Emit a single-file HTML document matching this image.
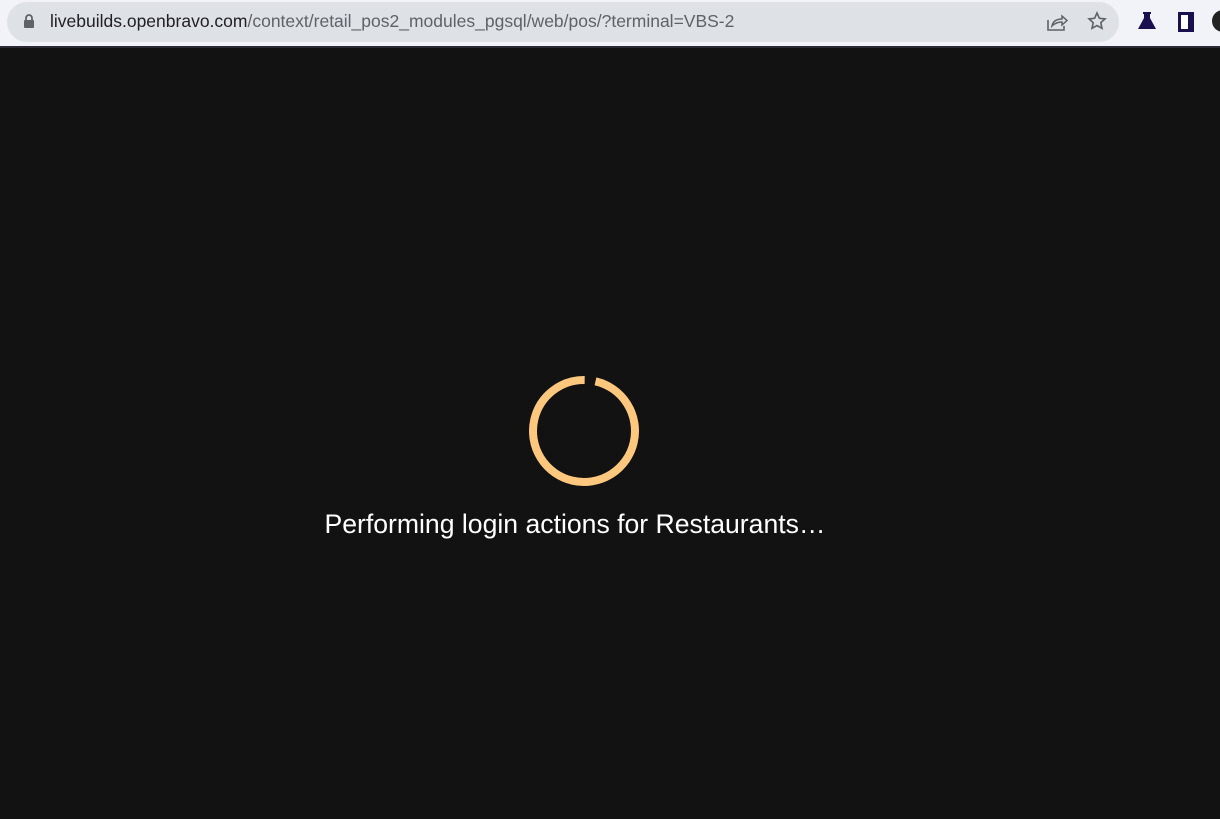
<!DOCTYPE html>
<html><head><meta charset="utf-8"><style>
html,body{margin:0;padding:0;width:1220px;height:819px;overflow:hidden;background:#121212;font-family:"Liberation Sans",sans-serif}
#bar{position:absolute;left:0;top:0;width:1220px;height:46px;background:#f1f3f9;border-bottom:2px solid #2a2a35}
#pill{position:absolute;left:7px;top:2px;width:1112px;height:40px;background:#dee1e6;border-radius:20px}
#url{position:absolute;left:50px;top:11px;font-size:17.5px;color:#5f6368;white-space:nowrap}
#url b{font-weight:normal;color:#202124}
#msg{position:absolute;left:0;width:1150px;top:509px;text-align:center;color:#fff;font-size:26.6px;}
</style></head><body>
<div id="bar">
<div id="pill"></div>
<svg style="position:absolute;left:23px;top:14px" width="12" height="14" viewBox="0 0 12 14"><rect x="1" y="6" width="10" height="8" rx="1" fill="#5f6368"/><path d="M3 6V4a3 3 0 0 1 6 0v2" stroke="#5f6368" stroke-width="1.8" fill="none"/></svg>
<div id="url"><b>livebuilds.openbravo.com</b>/context/retail_pos2_modules_pgsql/web/pos/?terminal=VBS-2</div>
<svg style="position:absolute;left:1046px;top:12px" width="22" height="20" viewBox="0 0 22 20"><path d="M2 8v10h16v-4" stroke="#5f6368" stroke-width="1.6" fill="none"/><path d="M6 14c1-5 5-7 10-7V4l5 4.5-5 4.5V10c-4 0-7 1-10 4z" stroke="#5f6368" stroke-width="1.5" fill="none"/></svg>
<svg style="position:absolute;left:1087px;top:11px" width="20" height="20" viewBox="0 0 20 20"><path d="M10 2l2.4 5.3 5.6.6-4.2 3.8 1.2 5.6L10 14.5 5 17.3l1.2-5.6L2 7.9l5.6-.6z" stroke="#5f6368" stroke-width="1.6" fill="none"/></svg>
<svg style="position:absolute;left:1137px;top:11px" width="20" height="20" viewBox="0 0 20 20"><path d="M6 1h8v2h-1v4l6 11H1L7 7V3H6z" fill="#1a1050"/></svg>
<div style="position:absolute;left:1178px;top:12px;width:7px;height:14px;border:3px solid #1a1050;border-right-width:6px;background:#fff"></div>
<div style="position:absolute;left:1212px;top:10px;width:22px;height:22px;border-radius:50%;background:#222"></div>
</div>
<svg style="position:absolute;left:524px;top:371px" width="120" height="120" viewBox="0 0 120 120"><circle cx="60" cy="60" r="51" fill="none" stroke="#fec77e" stroke-width="8" stroke-dasharray="309 11" transform="rotate(-77 60 60)"/></svg>
<div id="msg">Performing login actions for Restaurants…</div>
</body></html>
